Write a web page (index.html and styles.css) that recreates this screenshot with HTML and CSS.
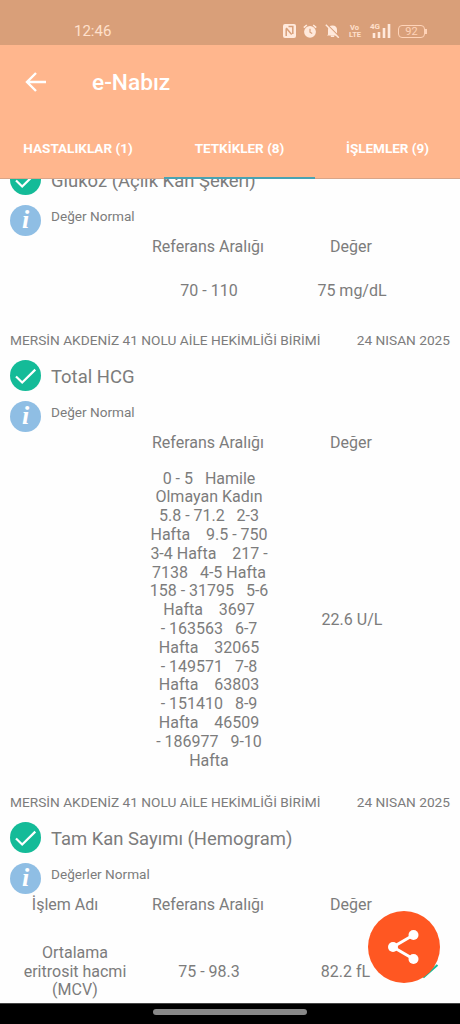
FILE: index.html
```html
<!DOCTYPE html>
<html lang="tr">
<head>
  <meta charset="UTF-8" />
  <meta name="viewport" content="width=device-width, initial-scale=1.0" />
  <title>e-Nabız</title>
  <link rel="stylesheet" href="styles.css">
</head>
<body>

  <svg width="0" height="0" class="defs">
    <symbol id="check" viewBox="0 0 31 31">
      <circle cx="15.5" cy="15.5" r="15.5" fill="#14bb98" />
      <path d="M6 16.5l6.2 6L25.3 9.6" fill="none" stroke="#fff" stroke-width="2.2" />
    </symbol>
  </svg>

  <div class="statusbar">
    <span class="clock">12:46</span>
    <div class="status-icons">
      <svg class="nfc" width="13" height="14" viewBox="0 0 13 14">
        <rect width="13" height="14" rx="2" fill="#ffe9dc" />
        <path d="M3.2 12V4.5M3.2 4l5.5 6.5M5.5 2.5h4.3V10" fill="none" stroke="#d99f79" stroke-width="1.5" />
      </svg>
      <svg class="alarm" width="14" height="14" viewBox="0 0 14 14">
        <circle cx="7" cy="7.8" r="5.9" fill="#ffe9dc" />
        <path d="M.8 3.6L3.8 1M13.2 3.6L10.2 1" stroke="#ffe9dc" stroke-width="1.6" />
        <path d="M7 4.8v3.4l2.2 1.3" fill="none" stroke="#d99f79" stroke-width="1.2" />
      </svg>
      <svg class="mute" width="15" height="14" viewBox="0 0 15 14">
        <path d="M3 10.5V6q0-4.5 4.5-4.5T12 6v4.5l1 1H2z" fill="#ffe9dc" />
        <path d="M5.8 12.2h3.4" stroke="#ffe9dc" stroke-width="1.6" />
        <path d="M1.8 .3l13 13" stroke="#d99f79" stroke-width="1.4" />
        <path d="M.8 .8l13 13" stroke="#ffe9dc" stroke-width="1.4" />
      </svg>
      <span class="volte">Vo<br>LTE</span>
      <div class="signal">
        <span>4G</span>
        <svg width="20" height="14" viewBox="0 0 20 14">
          <path d="M3 9v5M8 8v6M13 4v10M18 0v14" stroke="#ffe9dc" stroke-width="2.6" />
        </svg>
      </div>
      <div class="battery">92</div>
    </div>
  </div>

  <header>
    <div class="navbar">
      <svg class="back" width="22" height="22" viewBox="0 0 22 22">
        <path d="M21 11H3M11 2L2 11l9 9" fill="none" stroke="#fff" stroke-width="2.4" />
      </svg>
      <h1>e-Nabız</h1>
    </div>
    <nav>
      <a href="#">HASTALIKLAR (1)</a>
      <a href="#" class="active">TETKİKLER (8)</a>
      <a href="#">İŞLEMLER (9)</a>
    </nav>
  </header>

  <main>
    <section class="record first">
      <div class="title-row">
        <svg class="badge"><use href="#check" /></svg>
        <h2>Glukoz (Açlık Kan Şekeri)</h2>
      </div>
      <div class="info-row">
        <span class="badge info">i</span>
        <p>Değer Normal</p>
      </div>
      <div class="cols head"><span></span><span>Referans Aralığı</span><span>Değer</span></div>
      <div class="cols values"><span></span><span>70 - 110</span><span>75 mg/dL</span></div>
    </section>

    <section class="record">
      <div class="meta"><span>MERSİN AKDENİZ 41 NOLU AİLE HEKİMLİĞİ BİRİMİ</span><span>24 NISAN 2025</span></div>
      <div class="title-row">
        <svg class="badge"><use href="#check" /></svg>
        <h2>Total HCG</h2>
      </div>
      <div class="info-row">
        <span class="badge info">i</span>
        <p>Değer Normal</p>
      </div>
      <div class="cols head"><span></span><span>Referans Aralığı</span><span>Değer</span></div>
      <div class="cols values long">
        <span></span>
        <span class="ranges">0 - 5   Hamile
Olmayan Kadın
5.8 - 71.2   2-3
Hafta    9.5 - 750
3-4 Hafta    217 -
7138   4-5 Hafta
158 - 31795   5-6
Hafta    3697
- 163563   6-7
Hafta    32065
- 149571   7-8
Hafta    63803
- 151410   8-9
Hafta    46509
- 186977   9-10
Hafta</span>
        <span>22.6 U/L</span>
      </div>
    </section>

    <section class="record">
      <div class="meta"><span>MERSİN AKDENİZ 41 NOLU AİLE HEKİMLİĞİ BİRİMİ</span><span>24 NISAN 2025</span></div>
      <div class="title-row">
        <svg class="badge"><use href="#check" /></svg>
        <h2>Tam Kan Sayımı (Hemogram)</h2>
      </div>
      <div class="info-row">
        <span class="badge info">i</span>
        <p>Değerler Normal</p>
      </div>
      <div class="cols head"><span class="test-name">İşlem Adı</span><span>Referans Aralığı</span><span>Değer</span></div>
      <div class="cols values tests">
        <span>Ortalama<br>eritrosit hacmi<br>(MCV)</span><span>75 - 98.3</span><span>82.2 fL</span>
        <svg class="tick" width="26" height="16" viewBox="0 0 26 16"><path d="M6 8l5 5L24.5 1" fill="none" stroke="#14bb98" stroke-width="2" /></svg>
      </div>
    </section>
  </main>

  <button class="fab" aria-label="Paylaş">
    <svg width="34" height="36" viewBox="0 0 34 36">
      <path d="M26.5 6L6 18l20.5 12" fill="none" stroke="#fff" stroke-width="3" />
      <circle cx="26.5" cy="6" r="5" fill="#fff" />
      <circle cx="6" cy="18" r="5" fill="#fff" />
      <circle cx="26.5" cy="30" r="5" fill="#fff" />
    </svg>
  </button>

  <footer><div class="handle"></div></footer>

</body>
</html>
```
FILE: styles.css
```css
* {
  margin: 0;
  padding: 0;
  box-sizing: border-box;
  font-family: Roboto, sans-serif;
}

body {
  width: 460px;
  height: 1024px;
  display: flex;
  flex-direction: column;
  overflow: hidden;
  background: #fefefe;
  color: #7c7c7c;
}

.defs {
  position: absolute;
}

.statusbar {
  height: 45px;
  flex: none;
  display: flex;
  justify-content: space-between;
  padding: 22px 35px 0 74px;
  background: #d99f79;
  color: #ffe0cc;
}

.clock {
  font-size: 15px;
  line-height: 19px;
}

.status-icons {
  display: flex;
  align-items: center;
  height: 18px;
}

.alarm {
  margin-left: 7px;
}

.mute {
  margin-left: 8px;
}

.volte {
  margin-left: 9px;
  width: 11px;
  font-size: 7.5px;
  font-weight: 700;
  line-height: 7px;
  text-align: center;
}

.signal {
  position: relative;
  height: 14px;
  margin-left: 11px;
}

.signal span {
  position: absolute;
  left: -1px;
  top: -1px;
  font-size: 8px;
  line-height: 8px;
  font-weight: 700;
  background: #d99f79;
}

.signal svg {
  display: block;
}

.battery {
  position: relative;
  width: 27px;
  height: 13px;
  margin-left: 7px;
  border: 1.5px solid #ffd3b8;
  border-radius: 4px;
  font-size: 11px;
  line-height: 11px;
  text-align: center;
  color: #ffd3b8;
}

.battery::after {
  content: "";
  position: absolute;
  right: -3px;
  top: 3px;
  width: 2px;
  height: 5px;
  background: #ffd3b8;
}

header {
  height: 134px;
  flex: none;
  background: #ffb68d;
  color: #fff;
  border-bottom: 1px solid #d9a588;
}

.navbar {
  height: 74px;
  display: flex;
  align-items: center;
  padding-left: 25px;
}

.navbar h1 {
  margin-left: 45px;
  font-size: 22.7px;
  font-weight: 500;
}

nav {
  display: grid;
  grid-template-columns: 164px 151px 145px;
  height: 60px;
}

nav a {
  padding: 21px 0 0;
  font-size: 13.5px;
  line-height: 17px;
  font-weight: 700;
  text-align: center;
  text-decoration: none;
  color: #fff;
}

nav a:first-child {
  padding-right: 8px;
}

nav a.active {
  border-bottom: 2px solid #48a3b2;
}

main {
  flex: 1;
  min-height: 0;
  overflow: hidden;
}

.record {
  padding: 0 10px 7px;
}

.first {
  margin-top: -15px;
}

.meta {
  display: flex;
  justify-content: space-between;
  height: 20px;
  margin-bottom: 9px;
  font-size: 13.7px;
  line-height: 19px;
  white-space: nowrap;
}

.title-row,
.info-row {
  display: flex;
  align-items: center;
  height: 31px;
}

.badge {
  width: 31px;
  height: 31px;
  margin-right: 10px;
}

.info {
  border-radius: 50%;
  background: #8fbee4;
  color: #fff;
  font: italic 700 26px/30px "Liberation Serif", serif;
  text-align: center;
}

.title-row h2 {
  padding-top: 2px;
  font-size: 18.45px;
  font-weight: 400;
  white-space: nowrap;
}

.info-row {
  margin-top: 10px;
}

.info-row p {
  margin-bottom: 9px;
  font-size: 13.6px;
  line-height: 18px;
}

.cols {
  display: grid;
  grid-template-columns: 130px 136px 150px 24px;
  align-items: center;
  text-align: center;
  font-size: 16px;
  line-height: 18.8px;
}

.head {
  height: 20px;
  padding-top: 2px;
}

.test-name {
  padding-right: 20px;
}

.values {
  height: 68px;
  padding: 2px 0 0 1px;
}

.long {
  height: 334px;
}

.tests {
  height: 114px;
  padding-left: 0;
  grid-template-columns: 130px 138px 135px 26px;
}

.ranges {
  white-space: pre;
}

.fab {
  position: absolute;
  left: 368px;
  top: 911px;
  width: 72px;
  height: 72px;
  display: flex;
  align-items: center;
  justify-content: center;
  border: none;
  border-radius: 50%;
  background: #ff5722;
}

footer {
  height: 21px;
  flex: none;
  background: #000;
  border-top: 1px solid #444;
}

.handle {
  width: 154px;
  height: 6px;
  margin: 5px auto 0;
  border-radius: 3px;
  background: #888;
}
```
